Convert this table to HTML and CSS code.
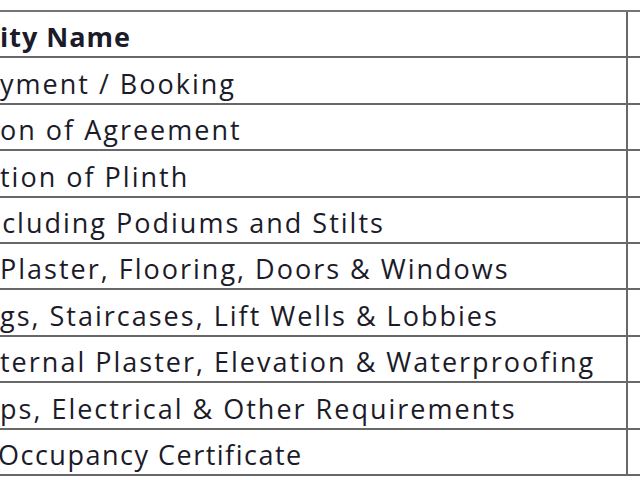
FILE: index.html
```html
<!DOCTYPE html>
<html>
<head>
<meta charset="utf-8">
<link rel="stylesheet" href="styles.css">
</head>
<body>
<div class="sheet">
  <div class="row head"><div class="cell">ity Name</div><div class="cell side"></div></div>
  <div class="row"><div class="cell">yment / Booking</div><div class="cell side"></div></div>
  <div class="row"><div class="cell">on of Agreement</div><div class="cell side"></div></div>
  <div class="row"><div class="cell">tion of Plinth</div><div class="cell side"></div></div>
  <div class="row"><div class="cell cut-x">xcluding Podiums and Stilts</div><div class="cell side"></div></div>
  <div class="row"><div class="cell">Plaster, Flooring, Doors &amp; Windows</div><div class="cell side"></div></div>
  <div class="row"><div class="cell">gs, Staircases, Lift Wells &amp; Lobbies</div><div class="cell side"></div></div>
  <div class="row"><div class="cell">ternal Plaster, Elevation &amp; Waterproofing</div><div class="cell side"></div></div>
  <div class="row"><div class="cell">ps, Electrical &amp; Other Requirements</div><div class="cell side"></div></div>
  <div class="row"><div class="cell cut-o">Occupancy Certificate</div><div class="cell side"></div></div>
</div>
</body>
</html>
```
FILE: styles.css
```css
html, body {
  margin: 0;
  padding: 0;
  background: #ffffff;
}
.sheet {
  margin-top: 10px;
  border-top: 2px solid #747474;
  width: 640px;
  overflow: hidden;
  font-family: "Open Sans", Lato, sans-serif;
  font-size: 27px;
  letter-spacing: 2px;
  color: #1b1b29;
}
.row {
  display: grid;
  grid-template-columns: 626px 1fr;
  height: 46.4px;
  box-sizing: border-box;
  border-bottom: 2px solid #686868;
}
.cell {
  display: flex;
  align-items: flex-end;
  padding-bottom: 6px;
  line-height: 27px;
  white-space: nowrap;
  overflow: hidden;
  box-sizing: border-box;
}
.side {
  border-left: 2px solid #686868;
  padding: 0;
}
.head .cell {
  font-weight: bold;
  letter-spacing: 1px;
}
.cut-x {
  text-indent: -14px;
}
.cut-o {
  text-indent: -2px;
  letter-spacing: 1.5px;
}
```
